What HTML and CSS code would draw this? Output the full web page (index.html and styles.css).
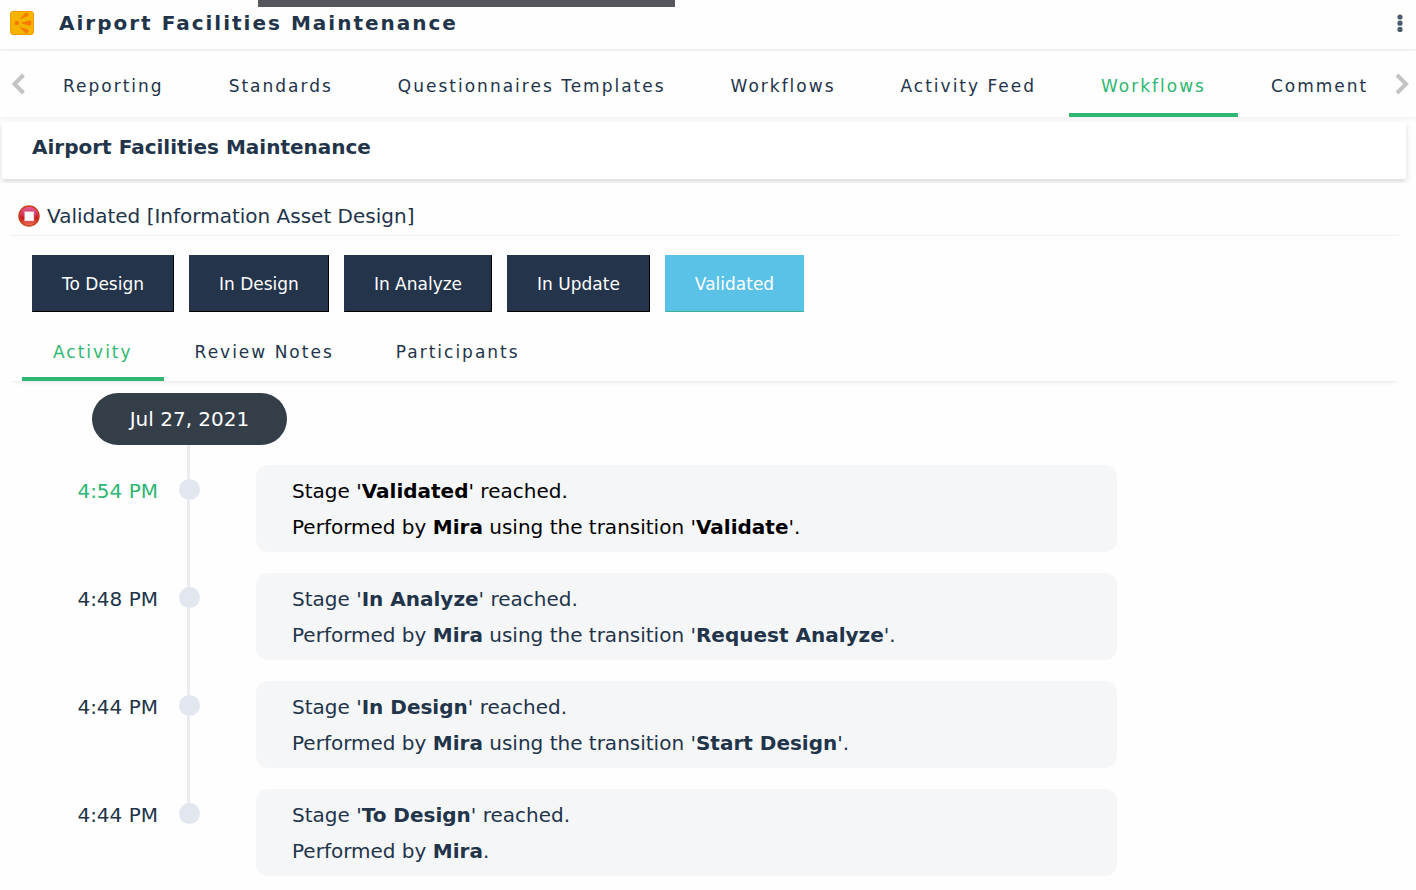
FILE: index.html
```html
<!DOCTYPE html>
<html lang="en">
<head>
<meta charset="utf-8">
<title>Airport Facilities Maintenance</title>
<link rel="stylesheet" href="styles.css">
</head>
<body>
<div class="top-strip"></div>
<header class="header">
  <svg class="logo" viewBox="0 0 24 24" aria-hidden="true">
    <rect x=".5" y=".5" width="23" height="23" rx="2.500" fill="#f5b400" stroke="#f79a00"/>
    <g fill="#f57c00"><circle cx="6.7" cy="12" r="2.3"/><path d="M10.500 12 19.500 9.200Q21.500 8.800 21.500 12T19.500 14.800z"/><path d="M9.300 8.600 15 2.200Q16.500 1 18 2.600T18 5.300z"/><path d="M9.300 15.400 15 21.800Q16.500 23 18 21.400T18 18.700z"/></g>
  </svg>
  <h1 class="title">Airport Facilities Maintenance</h1>
  <button class="menu" aria-label="More options">
    <svg width="8" height="20" viewBox="0 0 8 20" fill="#4d5b70"><circle cx="4" cy="4" r="2.600"/><circle cx="4" cy="10.200" r="2.600"/><circle cx="4" cy="16.400" r="2.600"/></svg>
  </button>
</header>
<nav class="tabbar">
  <button class="arrow" aria-label="Scroll left"><svg width="14" height="22" viewBox="0 0 14 22"><path d="M12.500 2 3.500 11l9 9"/></svg></button>
  <div class="tabs">
    <button class="tab">Reporting</button>
    <button class="tab">Standards</button>
    <button class="tab">Questionnaires Templates</button>
    <button class="tab">Workflows</button>
    <button class="tab">Activity Feed</button>
    <button class="tab active">Workflows</button>
    <button class="tab">Comment</button>
  </div>
  <button class="arrow arrow-right" aria-label="Scroll right"><svg width="14" height="22" viewBox="0 0 14 22"><path d="M2 2l9 9-9 9"/></svg></button>
</nav>
<main>
  <div class="card-wrap"><h2 class="card">Airport Facilities Maintenance</h2></div>
  <section class="content">
    <div class="status">
      <svg width="22" height="22" viewBox="0 0 22 22" aria-hidden="true">
        <defs><linearGradient id="stop" x2="0" y2="1"><stop offset="0" stop-color="#e8609a"/><stop offset=".4" stop-color="#d8396a"/><stop offset=".6" stop-color="#c91818"/><stop offset="1" stop-color="#f07a62"/></linearGradient></defs>
        <circle cx="11" cy="11" r="10" fill="url(#stop)" stroke="#c9401c" stroke-width="1.500"/>
        <rect x="6.500" y="6.500" width="9.500" height="9.500" fill="#fff" stroke="#e58a92" stroke-width=".6"/>
      </svg>
      <span>Validated [Information Asset Design]</span>
    </div>
    <div class="stages">
      <button class="stage">To Design</button>
      <button class="stage">In Design</button>
      <button class="stage">In Analyze</button>
      <button class="stage">In Update</button>
      <button class="stage current">Validated</button>
    </div>
    <nav class="tabs subtabs">
      <button class="tab active">Activity</button>
      <button class="tab">Review Notes</button>
      <button class="tab">Participants</button>
    </nav>
    <div class="timeline">
      <div class="date">Jul 27, 2021</div>
      <ol class="events">
        <li class="event latest"><time class="time">4:54 PM</time><span class="dot"></span><div class="entry"><p>Stage '<b>Validated</b>' reached.</p><p>Performed by <b>Mira</b> using the transition '<b>Validate</b>'.</p></div></li>
        <li class="event"><time class="time">4:48 PM</time><span class="dot"></span><div class="entry"><p>Stage '<b>In Analyze</b>' reached.</p><p>Performed by <b>Mira</b> using the transition '<b>Request Analyze</b>'.</p></div></li>
        <li class="event"><time class="time">4:44 PM</time><span class="dot"></span><div class="entry"><p>Stage '<b>In Design</b>' reached.</p><p>Performed by <b>Mira</b> using the transition '<b>Start Design</b>'.</p></div></li>
        <li class="event"><time class="time">4:44 PM</time><span class="dot"></span><div class="entry"><p>Stage '<b>To Design</b>' reached.</p><p>Performed by <b>Mira</b>.</p></div></li>
      </ol>
    </div>
  </section>
</main>
</body>
</html>
```
FILE: styles.css
```css
* { box-sizing: border-box; margin: 0; padding: 0; }
body { background: #fefefe; color: #22344a; font: 20px/24px Verdana, "DejaVu Sans", sans-serif; }
button { font: inherit; color: inherit; background: none; border: 0; cursor: pointer; }

.top-strip { position: absolute; top: 0; left: 258px; width: 417px; height: 7px; background: #54575b; }
.header { display: flex; align-items: center; height: 51px; padding: 0 12px 4px 10px; border-bottom: 2px solid #f4f4f4; }
.logo { width: 24px; height: 24px; }
.title { flex: 1; margin-left: 25px; font-size: 20px; letter-spacing: 2px; }
.menu { display: flex; }

.tabbar { display: flex; height: 66px; box-shadow: 0 1px 5px rgba(0, 0, 0, .08); }
.arrow { flex: none; display: flex; align-items: center; width: 31px; padding-left: 11px; }
.arrow-right { width: 21px; padding-left: 0; }
.arrow path { fill: none; stroke: #c3c3c3; stroke-width: 4; }
.tabs { display: flex; flex: 1; min-width: 0; }
.tab { padding: 3px 31px 0; border-bottom: 4px solid transparent; font-size: 17px; letter-spacing: 2px; white-space: nowrap; }
.tabbar .tabs { gap: 1px; }
.tabbar .tab { padding: 7px 32px 0; }
.tab.active { color: #2fb672; border-color: #2fb672; }

.card-wrap { padding: 5px 10px 4px 2px; overflow: hidden; }
.card { height: 57px; padding: 13px 30px; background: #fff; font-size: 20px; box-shadow: 0 3px 6px rgba(0, 0, 0, .14); }

.content { margin: 0 17px 0 10px; }
.status { display: flex; align-items: center; gap: 7px; height: 53px; padding: 13px 8px 0; border-bottom: 1px solid #f0f0f0; }
.stages { display: flex; gap: 15px; padding: 19px 22px 11px; }
.stage { height: 57px; padding: 0 29px; background: #23344b; color: #fff; font-size: 17px; border: 1px solid #23344b; border-right-color: #000; border-bottom-color: #000; }
.stage.current { background: #5ac1e7; border-color: #5ac1e7; border-bottom-color: #3cb093; }
.subtabs { height: 58px; padding-left: 12px; box-shadow: 0 4px 4px -3px rgba(0, 0, 0, .1); }

.timeline { padding: 12px 0 14px; }
.date { width: 195px; margin-left: 82px; padding: 14px 0; border-radius: 26px; background: #333e49; color: #fff; text-align: center; }
.events { display: grid; gap: 21px; padding-top: 20px; list-style: none; background: linear-gradient(#ececee, #ececee) 177px 0 / 3px 370px no-repeat; }
.event { display: grid; grid-template-columns: 148px 21px minmax(0, 896px); column-gap: 21px; }
.time { padding-top: 8px; text-align: right; line-height: 36px; }
.dot { width: 21px; height: 21px; margin-top: 14px; border-radius: 50%; background: #e2e6ef; }
.entry { margin-left: 35px; padding: 8px 36px 7px; border-radius: 12px; background: #f5f6f8; line-height: 36px; }
.latest .time { color: #2fb672; }
.latest .entry { color: #000; }
```
